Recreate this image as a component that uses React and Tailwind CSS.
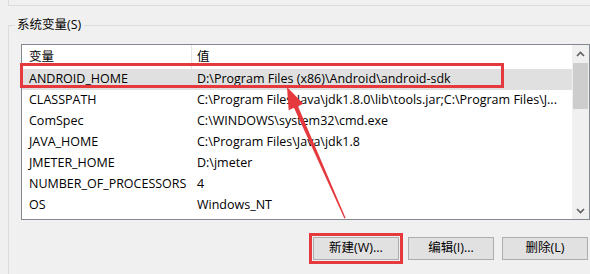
const vars = [
  ['ANDROID_HOME', 'D:\\Program Files (x86)\\Android\\android-sdk'],
  ['CLASSPATH', 'C:\\Program Files\\Java\\jdk1.8.0\\lib\\tools.jar;C:\\Program Files\\J...'],
  ['ComSpec', 'C:\\WINDOWS\\system32\\cmd.exe'],
  ['JAVA_HOME', 'C:\\Program Files\\Java\\jdk1.8'],
  ['JMETER_HOME', 'D:\\jmeter'],
  ['NUMBER_OF_PROCESSORS', '4'],
  ['OS', 'Windows_NT'],
]

function Chevron({ down }) {
  return (
    <svg width="9" height="6" viewBox="0 0 9 6">
      <polyline
        points={down ? '1,1 4.5,4.5 8,1' : '1,5 4.5,1.5 8,5'}
        fill="none"
        stroke="#606060"
        strokeWidth="1.6"
      />
    </svg>
  )
}

function WinButton({ children }) {
  return (
    <button className="w-[86px] h-[23px] flex items-center justify-center bg-[#e1e1e1] border border-[#adadad]">
      {children}
    </button>
  )
}

export default function App() {
  return (
    <div className="relative w-[590px] h-[274px] overflow-hidden bg-[#f0f0f0] text-[12.5px] text-black font-['Open_Sans','Noto_Sans_CJK_SC',sans-serif]">
      {/* tail of the user variables group above */}
      <div className="ml-[8px] w-[700px] h-[6px] border-l border-b border-[#dcdcdc]" />

      <fieldset className="mt-[12px] ml-[8px] w-[700px] h-[400px] border border-[#dcdcdc]">
        <legend className="ml-[5px] px-[3px] leading-[14px]">系统变量(S)</legend>
        <div className="pl-[12px]">
          <div className="w-[569px] mt-[12px]">
            {/* list view */}
            <div className="flex h-[176px] border border-[#828790] bg-white">
              <div className="flex-1">
                <div className="flex h-[24px]">
                  <div className="w-[170px] flex items-center pl-[7px] border-r border-[#e5e5e5]">变量</div>
                  <div className="flex-1 flex items-center pl-[5px]">值</div>
                </div>
                {vars.map(([name, value], i) => (
                  <div key={name} className={`flex h-[21px] items-center whitespace-nowrap ${i === 0 ? 'bg-[#e0e0e0]' : ''}`}>
                    <div className="w-[170px] pl-[7px]">{name}</div>
                    <div className="flex-1 pl-[5px] overflow-hidden">{value}</div>
                  </div>
                ))}
              </div>
              {/* scrollbar */}
              <div className="w-[17px] flex flex-col bg-[#f0f0f0]">
                <div className="h-[17px] flex items-center justify-center">
                  <Chevron />
                </div>
                <div className="mx-[1px] mt-[1px] h-[46px] bg-[#cdcdcd]" />
                <div className="flex-1" />
                <div className="h-[17px] flex items-center justify-center">
                  <Chevron down />
                </div>
              </div>
            </div>

            {/* buttons */}
            <div className="mt-[17px] flex justify-end gap-[8px] pr-[2px]">
              <div className="relative mr-[1px]">
                <WinButton>新建(W)...</WinButton>
                <div className="absolute -inset-[4px] border-[3px] border-[#e5393d]" />
              </div>
              <WinButton>编辑(I)...</WinButton>
              <WinButton>删除(L)</WinButton>
            </div>
          </div>
        </div>
      </fieldset>

      {/* annotation: box around the ANDROID_HOME row */}
      <div className="absolute left-[20px] top-[63px] w-[484px] h-[25px] border-[3px] border-[#e5393d]" />

      {/* annotation: arrow */}
      <svg className="absolute inset-0 pointer-events-none" width="590" height="274">
        <polygon
          points="287,87 303.3,103.8 298,106.2 345.6,218 344.4,218.4 294,107.8 288.7,110.2"
          fill="#e5393d"
        />
      </svg>
    </div>
  )
}
